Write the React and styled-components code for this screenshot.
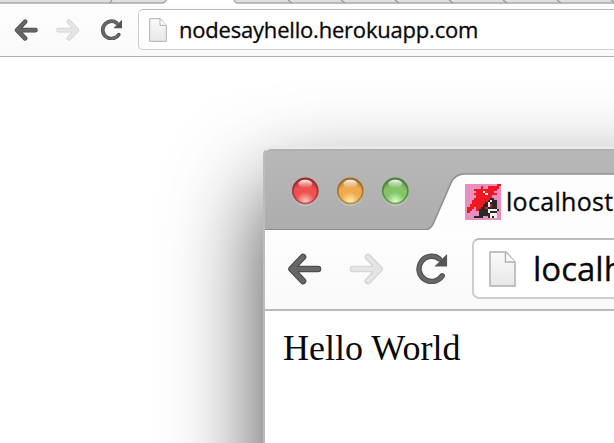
import React from "react";
import styled, { createGlobalStyle } from "styled-components";

const Global = createGlobalStyle`
  *{box-sizing:border-box}
  body{margin:0;background:#fff;overflow:hidden}
`;
const Page = styled.main`
  position:relative;width:614px;height:443px;overflow:hidden;background:#fff;
`;
const TopTabs = styled.svg`display:block;width:614px;height:4px;`;
const Toolbar = styled.div`
  display:flex;align-items:flex-start;
  height:${p => p.$large ? 81 : 53}px;
  padding:${p => p.$large ? "8px 0 0 22px" : "5px 0 0 14px"};
  background:linear-gradient(#fefefe,#f9f9f9);
  border-bottom:${p => p.$large ? 2 : 1}px solid ${p => p.$large ? "#bababa" : "#b0b0b0"};
`;
const NavIcon = styled.svg`
  flex:none;display:block;width:${p => p.$w}px;height:${p => p.$w * 32 / 36}px;
  margin-top:${p => p.$top}px;margin-right:${p => p.$gap}px;
`;
const Address = styled.div`
  flex:none;display:flex;align-items:center;background:#fff;
  width:${p => p.$large ? 240 : 500}px;height:${p => p.$large ? 61 : 41}px;
  padding-left:${p => p.$large ? 15 : 10}px;
  border:${p => p.$large ? 2 : 1.4}px solid #cdcdcd;
  border-top-color:#bcbcbc;border-radius:${p => p.$large ? 7 : 5}px;
`;
const PageIcon = styled.svg`
  flex:none;width:${p => p.$large ? 27 : 18}px;height:${p => p.$large ? 36 : 24}px;
`;
const Url = styled.span`
  font:${p => p.$size}px/1 "Open Sans","Noto Sans",sans-serif;color:#080808;
  letter-spacing:${p => p.$track}px;margin-left:${p => p.$gap}px;white-space:nowrap;
  padding-bottom:${p => p.$lift || 0}px;
  -webkit-text-stroke:.3px #080808;
`;
const Window = styled.section`
  position:absolute;left:263px;top:146px;width:500px;height:500px;
  background:#fff;border-radius:9px 9px 0 0;
  border-left:2px solid #bcbcbc;border-top:3px solid #e9e9e9;
  box-shadow:0 44px 92px rgba(0,0,0,.72);
`;
const TitleBar = styled.header`
  display:flex;height:81px;padding-left:26px;
  background:linear-gradient(#b8b8b8,#adadad);
  border-top:2px solid #b0b0b0;border-radius:6px 0 0 0;
  box-shadow:inset 0 -1px #8c8c8c;
`;
const Lights = styled.div`display:flex;gap:17px;padding-top:26px;`;
const Light = styled.svg`display:block;width:28px;height:30px;`;
const Tab = styled.div`position:relative;height:79px;width:220px;margin-left:17px;`;
const TabShape = styled.svg`display:block;width:220px;height:79px;`;
const TabContent = styled.div`
  position:absolute;left:39px;top:33px;display:flex;align-items:center;height:36px;
`;
const Favicon = styled.svg`display:block;width:36px;height:36px;`;
const Body = styled.article`
  padding:17px 0 0 18px;color:#080808;font:36px/40px "Liberation Serif",serif;
  white-space:nowrap;
`;

function Arrow({ forward, ...rest }) {
  return (
    <NavIcon viewBox="0 0 36 32" {...rest}>
      <g transform={forward ? "translate(36 0) scale(-1 1)" : undefined} fill="none" strokeLinecap="round" strokeLinejoin="round">
        <path d="M16 4L4.5 16 16 28M6 16h25" stroke={forward ? "#d2d2d2" : "#484848"} strokeWidth="6.6" />
        <path d="M16 4L4.5 16 16 28M6 16h25" stroke={forward ? "#e5e5e5" : "#676767"} strokeWidth="4.5" />
      </g>
    </NavIcon>
  );
}
function Reload(props) {
  return (
    <NavIcon viewBox="0 0 36 32" {...props}>
      <path d="M28 23.5A13 13 0 1 1 25 6" fill="none" stroke="#505050" strokeWidth="5.6" strokeLinecap="round" />
      <path d="M28 23.5A13 13 0 1 1 25 6" fill="none" stroke="#686868" strokeWidth="3.3" strokeLinecap="round" />
      <path d="M33 1v13H20z" fill="#555" />
    </NavIcon>
  );
}
function FileIcon({ large, id }) {
  return (
    <PageIcon $large={large} viewBox="0 0 27 36">
      <defs><linearGradient id={id} x2="0" y2="1"><stop stopColor="#fafafa" /><stop offset="1" stopColor="#e8e8e8" /></linearGradient></defs>
      <path d="M1 1h16l9 10v24H1z" fill={`url(#${id})`} stroke="#b0b0b0" strokeWidth="1.5" />
      <path d="M16.5 1.5V11H26" fill="#fff" stroke="#b0b0b0" strokeWidth="1.5" />
    </PageIcon>
  );
}
function TrafficLight({ name, edge, mid, glow }) {
  return (
    <Light viewBox="0 0 28 30">
      <defs>
        <radialGradient id={name} cx=".5" cy=".92" r=".95">
          <stop stopColor={glow} /><stop offset=".4" stopColor={mid} /><stop offset=".65" stopColor={mid} /><stop offset="1" stopColor={edge} />
        </radialGradient>
        <linearGradient id={name + "Edge"} x2="0" y2="1"><stop stopColor={edge} /><stop offset="1" stopColor={edge} stopOpacity=".65" /></linearGradient>
        <linearGradient id={name + "Shine"} x2="0" y2="1"><stop stopColor="#fff" stopOpacity=".95" /><stop offset="1" stopColor="#fff" stopOpacity="0" /></linearGradient>
      </defs>
      <circle cx="14.3" cy="15.5" r="13.2" fill="#cacaca" />
      <circle cx="14.3" cy="14" r="12.5" fill={`url(#${name})`} stroke={`url(#${name}Edge)`} strokeWidth="1.8" />
      <ellipse cx="14.3" cy="6.8" rx="7" ry="4" fill={`url(#${name}Shine)`} />
    </Light>
  );
}

const sprite = [
  "pppppppppppppprr",
  "ppppppprpprrrrrp",
  "pppprrrrrrrrrrpp",
  "ppppprrrwrrrrppp",
  "pppprrrrrwrrrrpp",
  "ppppprrrrrrrpppp",
  "pppprrrrrrrkkppp",
  "ppprrrrrrrkwkkpp",
  "ppprrrrrrkwkkkpp",
  "pprrrrrrkkwrkkpp",
  "prrrprrkkrkkkkpp",
  "prrpprkkkkwwwwkp",
  "prppppkkkkwkkkpp",
  "ppppppkkkkkwwwpp",
  "ppppkkkkppkwkwpp",
  "pppppppppppppppp",
];
const colors = { p: "#e98fc0", r: "#f01820", k: "#2b2926", w: "#f1eeee" };

export default function App() {
  return (
    <Page>
      <Global />
      <TopTabs viewBox="0 0 614 4">
        <path d="M0 0h168l-4 3H0zM234 0h380v3H238z" fill="#e0e0e0" />
        <path d="M0 3h162q3 0 4-3M234 0q1 3 4 3h376" fill="none" stroke="#a9a9a9" strokeWidth="1.4" />
        <path d="M112 0l-2 3M288 0l4 3M341 0l4 3M395 0l4 3M449 0l4 3M503 0l4 3M557 0l4 3M611 0l4 3" stroke="#989898" strokeWidth="1.2" />
      </TopTabs>
      <Toolbar>
        <Arrow $w={25} $top={9.5} $gap={16} />
        <Arrow forward $w={25} $top={9.5} $gap={19.5} />
        <Reload $w={24} $top={9.5} $gap={14.5} />
        <Address><FileIcon id="file" /><Url $size={22} $track={-0.2} $gap={12} $lift={2}>nodesayhello.herokuapp.com</Url></Address>
      </Toolbar>
      <Window>
        <TitleBar>
          <Lights>
            <TrafficLight name="red" edge="#9d2828" mid="#ef5050" glow="#ffc8c0" />
            <TrafficLight name="amber" edge="#a06a28" mid="#efaa4e" glow="#fff0a8" />
            <TrafficLight name="green" edge="#4a8038" mid="#82c467" glow="#dcffc0" />
          </Lights>
          <Tab>
            <TabShape viewBox="0 0 220 79">
              <path d="M0 79q5 0 8-8L25 32q4-9 14-9h181v56z" fill="#fdfdfd" />
              <path d="M0 78.5q5 0 8-7.5L25 32q4-9 14-9h181" fill="none" stroke="#8f8f8f" strokeWidth="1.6" />
            </TabShape>
            <TabContent>
              <Favicon viewBox="0 0 16 16" shapeRendering="crispEdges">
                {sprite.flatMap((row, y) => [...row].map((c, x) => <rect key={`${x}-${y}`} x={x} y={y} width="1" height="1" fill={colors[c]} />))}
              </Favicon>
              <Url $size={25} $track={0.3} $gap={5} $lift={2}>localhost</Url>
            </TabContent>
          </Tab>
        </TitleBar>
        <Toolbar $large>
          <Arrow $w={36} $top={14.5} $gap={25} />
          <Arrow forward $w={36} $top={14.5} $gap={30.5} />
          <Reload $w={35} $top={15} $gap={22.5} />
          <Address $large><FileIcon large id="fileLarge" /><Url $size={33} $track={0} $gap={17}>localhost</Url></Address>
        </Toolbar>
        <Body>Hello World</Body>
      </Window>
    </Page>
  );
}
